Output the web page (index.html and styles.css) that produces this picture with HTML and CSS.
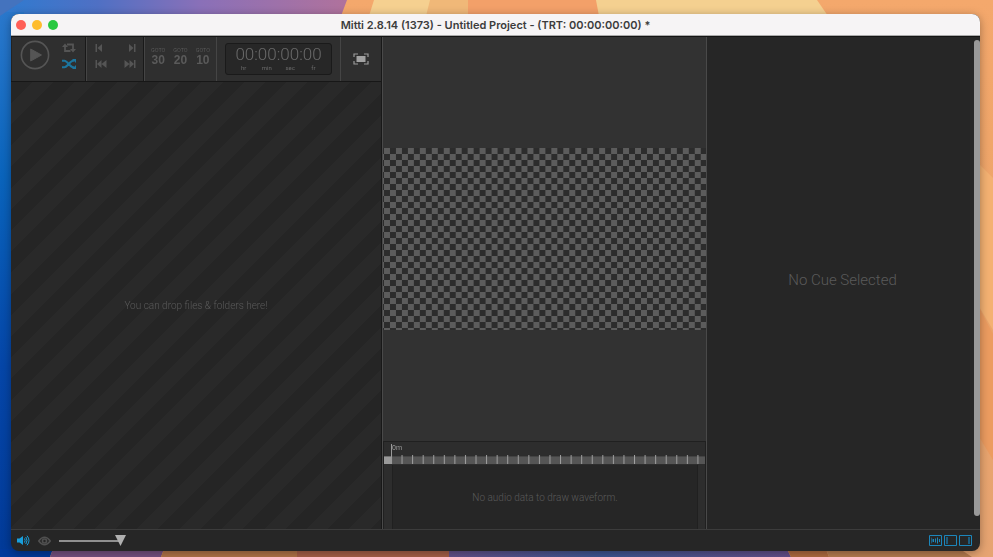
FILE: index.html
```html
<!DOCTYPE html>
<html lang="en">
<head>
<meta charset="utf-8">
<title>Mitti - Untitled Project</title>
<link rel="stylesheet" href="styles.css">
</head>
<body>
<svg class="wallpaper" viewBox="0 0 993 557" preserveAspectRatio="none" aria-hidden="true">
  <defs>
    <linearGradient id="sky" x1="0" x2="1"><stop offset="0" stop-color="#2e7bd0"/><stop offset=".28" stop-color="#4f70c4"/><stop offset=".58" stop-color="#8a70b8"/><stop offset="1" stop-color="#b0729c"/></linearGradient>
    <linearGradient id="sea" x1="0" x2="0" y1="0" y2="1"><stop offset="0" stop-color="#2a78cc"/><stop offset=".3" stop-color="#0a64bc"/><stop offset=".65" stop-color="#0546a8"/><stop offset="1" stop-color="#023a98"/></linearGradient>
    <linearGradient id="sand" x1="0" x2="0" y1="0" y2="1"><stop offset="0" stop-color="#f4a86c"/><stop offset=".5" stop-color="#eca468"/><stop offset="1" stop-color="#e6a472"/></linearGradient>
    <linearGradient id="dusk" x1="0" x2="1"><stop offset="0" stop-color="#64518a"/><stop offset=".45" stop-color="#3d5692"/><stop offset="1" stop-color="#65508a"/></linearGradient>
  </defs>
  <path fill="url(#sand)" d="M0 0H993V557H0Z"/>
  <path fill="url(#sky)" d="M0 0H347L341 16H0Z"/>
  <path fill="url(#sea)" d="M0 12H24V557H0Z"/>
  <path fill="#4473be" d="M0 0H24L0 16Z"/>
  <path fill="#f5d090" d="M374 0H468L470 16H369Z"/>
  <path fill="#f0b878" d="M430 0H468L470 16H426Z"/>
  <path fill="#f3a069" d="M468 0H596L600 16H468Z"/>
  <path fill="#f4d090" d="M596 0H817L828 16H599Z"/>
  <path fill="#f4b172" d="M975 160L993 178V330L975 300Z"/>
  <path fill="#ec9c60" d="M975 300L993 334V460L975 430Z"/>
  <path fill="#023a9c" d="M0 549H53L50 557H0Z"/>
  <path fill="#755080" d="M53 549H164L161 557H50Z"/>
  <path fill="#b27448" d="M164 549H297V557H161Z"/>
  <path fill="#a65f48" d="M297 549H449V557H297Z"/>
  <path fill="url(#dusk)" d="M449 549H787L791 557H449Z"/>
  <path fill="#b06b40" d="M787 549H826L829 557H791Z"/>
  <path fill="#b77c50" d="M826 549H960L972 557H829Z"/>
</svg>

<main class="window">
  <header class="titlebar">
    <div class="lights">
      <button class="light close" aria-label="Close"></button>
      <button class="light minimize" aria-label="Minimize"></button>
      <button class="light zoom" aria-label="Zoom"></button>
    </div>
    <h1>Mitti 2.8.14 (1373) - Untitled Project - (TRT: 00:00:00:00) *</h1>
  </header>

  <div class="panes">
    <section class="cues">
      <div class="toolbar">
        <div class="group playback">
          <button class="icon" aria-label="Play"><svg width="30" height="30" viewBox="0 0 30 30"><circle cx="15" cy="15" r="13.6" fill="none" stroke="#555" stroke-width="1.6"/><path fill="#555" stroke="#555" stroke-linejoin="round" d="M10.700 9V21L21.500 15Z"/></svg></button>
          <div class="stack">
            <button class="icon" aria-label="Loop"><svg width="14" height="10" viewBox="0 0 14 10"><path fill="none" stroke="#555" stroke-width="1.800" d="M3 3V8H8.500M5 1.500H11V7"/><path fill="#555" d="M0 4L3 .5L6 4ZM8 6L11 9.500L14 6Z"/></svg></button>
            <button class="icon" aria-label="Shuffle"><svg width="14" height="10" viewBox="0 0 14 10"><path fill="none" stroke="#1c759e" stroke-width="2" d="M0 1.800H2.500C5.500 1.800 8 8.200 11 8.200H12M0 8.200H2.500C5.500 8.200 8 1.800 11 1.800H12"/><path fill="#1c759e" d="M10 0H14V4ZM10 10H14V6Z"/></svg></button>
          </div>
        </div>
        <div class="group skip">
          <button class="icon" aria-label="Previous cue"><svg width="12" height="8" viewBox="0 0 12 8"><path fill="#555" d="M.5 0H2V8H.5ZM7 0V8L2.500 4Z"/></svg></button>
          <button class="icon" aria-label="Next cue"><svg width="12" height="8" viewBox="0 0 12 8"><path fill="#555" d="M11.500 0H10V8H11.500ZM5 0V8L9.500 4Z"/></svg></button>
          <button class="icon" aria-label="First cue"><svg width="12" height="8" viewBox="0 0 12 8"><path fill="#555" d="M.5 0H2V8H.5ZM6.500 0V8L2 4ZM11.500 0V8L6.500 4Z"/></svg></button>
          <button class="icon" aria-label="Last cue"><svg width="12" height="8" viewBox="0 0 12 8"><path fill="#555" d="M11.500 0H10V8H11.500ZM5.500 0V8L10 4ZM.5 0V8L5.500 4Z"/></svg></button>
        </div>
        <div class="group goto">
          <button class="jump"><small>GOTO</small>30</button>
          <button class="jump"><small>GOTO</small>20</button>
          <button class="jump"><small>GOTO</small>10</button>
        </div>
        <div class="group clock">
          <div class="timer">
            <div class="digits">00:00:00:00</div>
            <div class="units"><span>hr</span><span>min</span><span>sec</span><span>fr</span></div>
          </div>
        </div>
        <div class="group full">
          <button class="icon" aria-label="Fullscreen"><svg width="16" height="12" viewBox="0 0 16 12"><path fill="none" stroke="#999" stroke-width="1.200" d="M1 4V1H5M11 1H15V4M15 8V11H11M5 11H1V8"/><path fill="#a2a2a2" d="M3.500 3H12.500V9H3.500Z"/></svg></button>
        </div>
      </div>
      <div class="dropzone"><p>You can drop files &amp; folders here!</p></div>
    </section>

    <section class="preview">
      <div class="stage"><div class="canvas"></div></div>
      <div class="timeline">
        <div class="scale"><span>0m</span></div>
        <svg class="ruler" viewBox="0 0 322 10" preserveAspectRatio="none" aria-hidden="true">
          <defs><pattern id="ticks" x="7" width="10.600" height="10" patternUnits="userSpaceOnUse"><path fill="#a0a0a0" d="M0 0H1V9H0Z"/></pattern></defs>
          <path fill="#555" d="M0 1.500H322V9H0Z"/><path fill="#444" d="M0 1H322V2H0Z"/>
          <path fill="url(#ticks)" d="M7 0H322V9H7Z"/>
          <path fill="#999" d="M0 1.500H8V9H0Z"/>
        </svg>
        <div class="waveform"><p>No audio data to draw waveform.</p></div>
      </div>
    </section>

    <section class="inspector">
      <p>No Cue Selected</p>
      <div class="scrollbar"></div>
    </section>
  </div>

  <footer class="statusbar">
    <button class="icon" aria-label="Audio"><svg width="13" height="11" viewBox="0 0 13 11"><path fill="#199fdc" d="M0 3.500H2.500L6 1V10L2.500 7.500H0Z"/><path fill="none" stroke="#199fdc" d="M7.500 3.500Q8.800 5.500 7.500 7.500M8.800 2Q11.200 5.500 8.800 9M10 .7Q14 5.500 10 10.300"/></svg></button>
    <button class="icon" aria-label="Preview"><svg width="13" height="10" viewBox="0 0 13 10"><path fill="none" stroke="#505050" stroke-width="1.500" d="M.7 5Q6.500-2.500 12.300 5Q6.500 12.500 .7 5Z"/><circle cx="6.500" cy="5" r="2" fill="none" stroke="#505050" stroke-width="1.600"/></svg></button>
    <input class="volume" type="range" min="0" max="100" value="100" aria-label="Volume">
    <div class="toggles">
      <button class="icon" aria-label="Toggle waveform"><svg width="13" height="11" viewBox="0 0 13 11"><path fill="none" stroke="#1c86bb" d="M.5 .5H12.500V10.500H.5Z"/><path fill="#1c5c7e" d="M2 2L4.500 5.500L2 9Z"/><path fill="none" stroke="#1c86bb" d="M4.500 4V7M6.500 3.500V7.500M8.500 2.500V8.500M10.500 4V7"/></svg></button>
      <button class="icon" aria-label="Toggle cue list"><svg width="13" height="11" viewBox="0 0 13 11"><path fill="none" stroke="#1c86bb" d="M.5 .5H12.500V10.500H.5Z"/><path fill="#1c5c7e" d="M2 2H4V9H2Z"/></svg></button>
      <button class="icon" aria-label="Toggle inspector"><svg width="13" height="11" viewBox="0 0 13 11"><path fill="none" stroke="#1c86bb" d="M.5 .5H12.500V10.500H.5Z"/><path fill="#1c5c7e" d="M9 2H11V9H9Z"/></svg></button>
    </div>
  </footer>
</main>
</body>
</html>
```

FILE: styles.css
```css
* { box-sizing: border-box; }

body {
  margin: 0;
  height: 100vh;
  padding: 14px 13px 6px 11px;
  overflow: hidden;
  font-family: Roboto, "Liberation Sans", sans-serif;
  font-weight: 300;
  color: #5a5a5a;
}

h1, p { margin: 0; }

button {
  margin: 0;
  padding: 0;
  border: 0;
  background: none;
  font: inherit;
  color: inherit;
}

.icon { display: flex; }

.wallpaper {
  position: fixed;
  inset: 0;
  width: 100%;
  height: 100%;
  z-index: -1;
}

.window {
  display: flex;
  flex-direction: column;
  height: 100%;
  border-radius: 8px;
  overflow: hidden;
  background: #262626;
  box-shadow: 0 2px 10px rgba(0, 0, 0, 0.35);
}

.titlebar {
  display: grid;
  grid-template-columns: 1fr auto 1fr;
  align-items: center;
  height: 22px;
  background: #f6f4f5;
  border-bottom: 1px solid #aaa;
}

.lights { display: flex; gap: 6px; padding-left: 5px; }

.light { width: 10px; height: 10px; border-radius: 50%; }

.close { background: #ff5f57; }
.minimize { background: #febc2e; }
.zoom { background: #28c840; }

.titlebar h1 { font-family: Inter, sans-serif; font-size: 11px; line-height: 16px; font-weight: 600; color: #3c3c3c; }

.panes {
  flex: 1;
  min-height: 0;
  display: grid;
  grid-template-columns: 371fr 325fr 273fr;
  border-top: 1px solid #141414;
}

.cues { display: flex; flex-direction: column; min-width: 0; border-right: 1px solid #181818; }

.toolbar {
  display: grid;
  grid-template-columns: 75px 58px 72px 124px 1fr;
  height: 45px;
  background: #2f2f2f;
  border-bottom: 1px solid #171717;
}

.group { display: flex; align-items: center; justify-content: center; border-left: 1px solid #454545; }
.group:first-child { border-left-color: #222; }

.playback { align-items: flex-start; justify-content: flex-start; gap: 12px; padding: 3px 0 0 8px; }
.stack { display: flex; flex-direction: column; gap: 6px; padding-top: 3px; }
.playback, .skip { border-right: 1px solid #191919; }

.skip {
  display: grid;
  grid-template-columns: auto auto;
  align-content: start;
  justify-content: space-between;
  gap: 8px;
  padding: 7px 7px 0 8px;
}

.goto { gap: 8px; padding-bottom: 4px; }

.jump { display: flex; flex-direction: column; align-items: center; font: 700 12px/14px "Liberation Sans", sans-serif; }
.jump small { font: 5px/6px Inter, sans-serif; }

.timer {
  width: 107px;
  height: 32px;
  background: #272727;
  border: 1px solid #1a1a1a;
  border-radius: 3px;
  text-align: center;
  color: #6a6a6a;
}

.digits { font-size: 17px; line-height: 20px; }
.units { display: grid; grid-template-columns: repeat(4, 1fr); padding: 0 6px; font-size: 6px; line-height: 7px; font-weight: 400; }

.dropzone {
  flex: 1;
  display: flex;
  align-items: center;
  justify-content: center;
  background: repeating-linear-gradient(135deg, #252525 0 15px, #292929 15px 30px);
  font-size: 10px;
}

.preview { display: flex; flex-direction: column; min-width: 0; border: solid #494949; border-width: 0 1px; background: #323232; }

.stage { flex: 1; display: flex; align-items: center; }

.canvas {
  width: 100%;
  aspect-ratio: 16 / 9;
  background: conic-gradient(#2c2c2c 25%, #5c5c5c 0 50%, #2c2c2c 0 75%, #5c5c5c 0) 1px 0 / calc(100% / 27) 12px;
}

.timeline { height: 88px; display: flex; flex-direction: column; border: 1px solid #202020; border-bottom: 0; background: #2d2d2d; }

.scale { height: 13px; padding: 2px 0 0 7px; }
.scale span { display: block; height: 11px; border-left: 1px solid #999; font-size: 7px; line-height: 8px; font-weight: 400; color: #999; }

.ruler { width: 100%; height: 10px; }

.waveform {
  flex: 1;
  margin: 0 7px 0 8px;
  display: flex;
  align-items: center;
  justify-content: center;
  border: solid #202020;
  border-width: 0 1px;
  background: #262626;
  font-size: 10px;
}

.inspector { display: flex; align-items: center; background: #262626; font-size: 15px; }
.inspector p { flex: 1; padding: 0 0 6px 4px; text-align: center; }

.scrollbar { align-self: stretch; width: 6px; margin: 3px 0 13px; border-radius: 3px; background: #999; }

.statusbar { display: flex; align-items: center; gap: 8px; height: 22px; padding: 0 8px 0 6px; border-top: 1px solid #3c3c3c; }

.volume {
  width: 67px;
  height: 12px;
  margin: 0;
  appearance: none;
  background: linear-gradient(#909090, #909090) 0 5px / 60px 2px no-repeat;
}
.volume::-webkit-slider-thumb { appearance: none; width: 11px; height: 11px; background: #b0b0b0; clip-path: polygon(0 0, 100% 0, 50% 100%); }

.toggles { display: flex; gap: 2px; margin-left: auto; }
```
